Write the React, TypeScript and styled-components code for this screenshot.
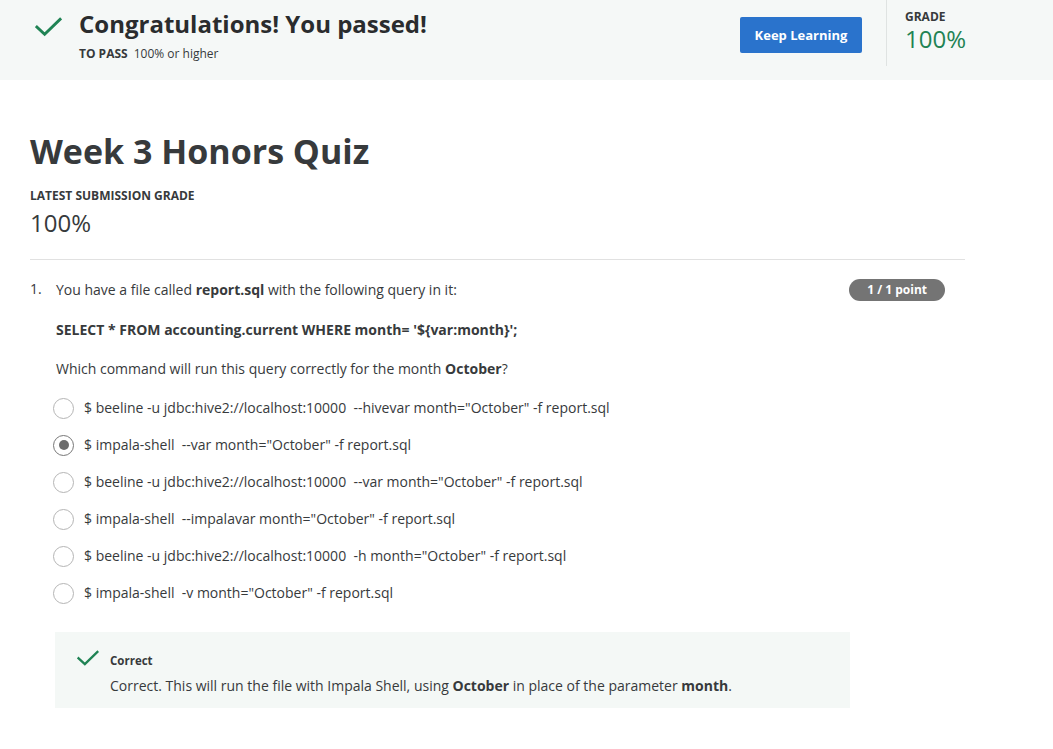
import React from 'react'
import styled, { createGlobalStyle } from 'styled-components'

const GlobalStyle = createGlobalStyle`
  html, body {
    margin: 0;
    padding: 0;
    background: #ffffff;
    font-family: "Open Sans", "Liberation Sans", sans-serif;
    color: #373a3c;
  }
`

const Page = styled.div`
  width: 1053px;
  min-height: 749px;
  background: #fff;
`

const Banner = styled.div`
  height: 80px;
  background: #f5f8f7;
  display: flex;
  align-items: flex-start;
`

const BannerMain = styled.div`
  flex: 1;
  display: flex;
  align-items: flex-start;
  padding: 10px 0 0 33px;
`

const CheckWrap = styled.div`
  width: 30px;
  height: 30px;
  margin-right: 16px;
  margin-top: 2px;
  display: flex;
  align-items: center;
  justify-content: center;
`

const BannerText = styled.div`
  display: flex;
  flex-direction: column;
`

const BannerTitle = styled.div`
  font-size: 24px;
  font-weight: 700;
  line-height: 28px;
  color: #2a2c2e;
`

const PassLine = styled.div`
  margin-top: 8px;
  font-size: 12px;
  line-height: 15px;
  color: #373a3c;
  b {
    font-weight: 700;
    margin-right: 6px;
  }
`

const KeepButton = styled.button`
  margin-top: 17px;
  margin-right: 24px;
  width: 122px;
  height: 36px;
  background: #2a73cc;
  border: none;
  border-radius: 2px;
  color: #fff;
  font-family: inherit;
  font-weight: 700;
  font-size: 13px;
`

const GradeBox = styled.div`
  width: 167px;
  height: 66px;
  border-left: 1px solid #dfe3e2;
  padding: 9px 0 0 18px;
  box-sizing: border-box;
`

const SmallCaps = styled.div`
  font-size: 12px;
  font-weight: 700;
  color: #373a3c;
  line-height: 15px;
`

const BigPercent = styled.div<{ $green?: boolean }>`
  margin-top: ${(p) => (p.$green ? '2px' : '7px')};
  font-size: 24px;
  line-height: 26px;
  color: ${(p) => (p.$green ? '#1f8354' : '#373a3c')};
`

const Content = styled.div`
  padding: 48px 0 0 30px;
  width: 935px;
`

const QuizTitle = styled.h1`
  margin: 0;
  font-size: 34px;
  font-weight: 700;
  line-height: 46px;
  color: #373a3c;
`

const SubmissionBlock = styled.div`
  margin-top: 14px;
  padding-bottom: 23px;
  border-bottom: 1px solid #e1e1e1;
`

const Question = styled.div`
  display: flex;
  margin-top: 19px;
  font-size: 14px;
  line-height: 20px;
`

const Num = styled.div`
  width: 26px;
`

const QBody = styled.div`
  flex: 1;
  p {
    margin: 0 0 19px 0;
  }
`

const QHead = styled.div`
  display: flex;
  justify-content: space-between;
  align-items: center;
  margin-bottom: 19px;
`

const Badge = styled.div`
  margin-right: 20px;
  height: 22px;
  padding: 0 18px;
  border-radius: 11px;
  background: #747474;
  color: #fff;
  font-size: 12px;
  font-weight: 700;
  line-height: 22px;
`

const Options = styled.div`
  display: flex;
  flex-direction: column;
  gap: 17px;
  margin-top: 0;
`

const Option = styled.label`
  display: flex;
  align-items: center;
  height: 20px;
  white-space: pre;
  color: #373a3c;
`

const Radio = styled.span<{ $checked?: boolean }>`
  box-sizing: border-box;
  width: 21px;
  height: 21px;
  border-radius: 50%;
  border: 1.5px solid ${(p) => (p.$checked ? '#777' : '#b5b5b5')};
  margin-left: -3px;
  margin-right: 10px;
  display: flex;
  align-items: center;
  justify-content: center;
  &::after {
    content: '';
    width: 10px;
    height: 10px;
    border-radius: 50%;
    background: #6c6c6c;
    display: ${(p) => (p.$checked ? 'block' : 'none')};
  }
`

const Feedback = styled.div`
  margin-top: 29px;
  margin-left: -1px;
  width: 795px;
  height: 76px;
  background: #f4f8f6;
  display: flex;
  padding: 18px 0 0 22px;
  box-sizing: border-box;
`

const FeedbackText = styled.div`
  margin-left: 11px;
`

const FeedbackTitle = styled.div`
  font-size: 11.5px;
  font-weight: 700;
  line-height: 16px;
  margin-top: 3px;
`

const FeedbackBody = styled.div`
  margin-top: 7px;
  font-size: 14px;
  line-height: 20px;
`

const Check = ({ size }: { size: number }) => (
  <svg width={size} height={size * 0.75} viewBox="0 0 28 21" fill="none">
    <path d="M2 10.5 L10 18 L26 2.5" stroke="#1f8354" strokeWidth="3" strokeLinecap="square" />
  </svg>
)

const options = [
  '$ beeline -u jdbc:hive2://localhost:10000  --hivevar month="October" -f report.sql',
  '$ impala-shell  --var month="October" -f report.sql',
  '$ beeline -u jdbc:hive2://localhost:10000  --var month="October" -f report.sql',
  '$ impala-shell  --impalavar month="October" -f report.sql',
  '$ beeline -u jdbc:hive2://localhost:10000  -h month="October" -f report.sql',
  '$ impala-shell  -v month="October" -f report.sql',
]

export default function App() {
  return (
    <Page>
      <GlobalStyle />
      <Banner>
        <BannerMain>
          <CheckWrap>
            <Check size={27} />
          </CheckWrap>
          <BannerText>
            <BannerTitle>Congratulations! You passed!</BannerTitle>
            <PassLine>
              <b>TO PASS</b>100% or higher
            </PassLine>
          </BannerText>
        </BannerMain>
        <KeepButton>Keep Learning</KeepButton>
        <GradeBox>
          <SmallCaps>GRADE</SmallCaps>
          <BigPercent $green>100%</BigPercent>
        </GradeBox>
      </Banner>

      <Content>
        <QuizTitle>Week 3 Honors Quiz</QuizTitle>
        <SubmissionBlock>
          <SmallCaps>LATEST SUBMISSION GRADE</SmallCaps>
          <BigPercent>100%</BigPercent>
        </SubmissionBlock>

        <Question>
          <Num>1.</Num>
          <QBody>
            <QHead>
              <span>
                You have a file called <b>report.sql</b> with the following query in it:
              </span>
              <Badge>1 / 1 point</Badge>
            </QHead>
            <p>
              <b>SELECT * FROM accounting.current WHERE month= '${'{var:month}'}';</b>
            </p>
            <p>
              Which command will run this query correctly for the month <b>October</b>?
            </p>
            <Options>
              {options.map((o, i) => (
                <Option key={i}>
                  <Radio $checked={i === 1} />
                  {o}
                </Option>
              ))}
            </Options>
            <Feedback>
              <Check size={22} />
              <FeedbackText>
                <FeedbackTitle>Correct</FeedbackTitle>
                <FeedbackBody>
                  Correct. This will run the file with Impala Shell, using <b>October</b> in place of the parameter <b>month</b>.
                </FeedbackBody>
              </FeedbackText>
            </Feedback>
          </QBody>
        </Question>
      </Content>
    </Page>
  )
}
